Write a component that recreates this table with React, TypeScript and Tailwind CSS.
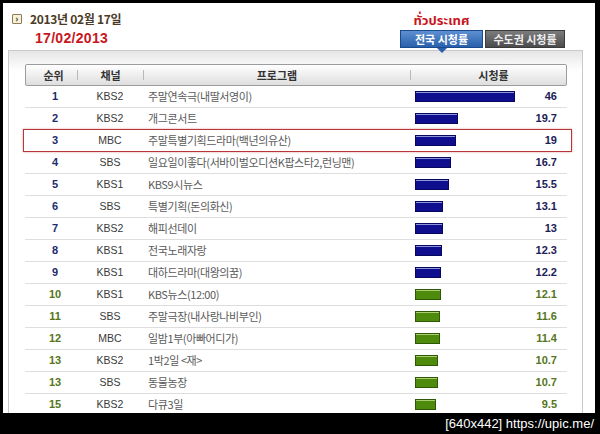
import React from "react"

type Row = {
  rank: number
  channel: string
  program: string
  rating: number
}

const rows: Row[] = [
  { rank: 1, channel: "KBS2", program: "주말연속극(내딸서영이)", rating: 46 },
  { rank: 2, channel: "KBS2", program: "개그콘서트", rating: 19.7 },
  { rank: 3, channel: "MBC", program: "주말특별기획드라마(백년의유산)", rating: 19 },
  { rank: 4, channel: "SBS", program: "일요일이좋다(서바이벌오디션K팝스타2,런닝맨)", rating: 16.7 },
  { rank: 5, channel: "KBS1", program: "KBS9시뉴스", rating: 15.5 },
  { rank: 6, channel: "SBS", program: "특별기획(돈의화신)", rating: 13.1 },
  { rank: 7, channel: "KBS2", program: "해피선데이", rating: 13 },
  { rank: 8, channel: "KBS1", program: "전국노래자랑", rating: 12.3 },
  { rank: 9, channel: "KBS1", program: "대하드라마(대왕의꿈)", rating: 12.2 },
  { rank: 10, channel: "KBS1", program: "KBS뉴스(12:00)", rating: 12.1 },
  { rank: 11, channel: "SBS", program: "주말극장(내사랑나비부인)", rating: 11.6 },
  { rank: 12, channel: "MBC", program: "일밤1부(아빠어디가)", rating: 11.4 },
  { rank: 13, channel: "KBS2", program: "1박2일 <재>", rating: 10.7 },
  { rank: 13, channel: "SBS", program: "동물농장", rating: 10.7 },
  { rank: 15, channel: "KBS2", program: "다큐3일", rating: 9.5 },
]

const kr = "font-['Noto_Sans_CJK_KR','Noto_Sans',sans-serif]"
const latin = "font-['Liberation_Sans',Arial,sans-serif]"

function HeaderSep() {
  return <span className="h-[10px] w-px bg-[#b8b8b8]" />
}

function RatingRow({ row, index }: { row: Row; index: number }) {
  const top = index < 9
  const highlight = index === 2
  return (
    <div className="relative grid h-[22px] grid-cols-[52px_66px_267px_157px] items-center border-b border-[#dedede]">
      {highlight ? (
        <span className="pointer-events-none absolute -top-px -bottom-px -left-[2px] -right-[5px] border border-[#b8353a] shadow-[0_0_2px_#e0a0a0]" />
      ) : null}
      <span
        className={`${latin} pl-[8px] text-center text-[11px] font-bold ${top ? "text-[#1d2a6b]" : "text-[#56761a]"}`}
      >
        {row.rank}
      </span>
      <span className={`${latin} text-center text-[10.5px] text-[#3a3a3a]`}>{row.channel}</span>
      <span className={`${kr} truncate pl-[5px] text-[11px] tracking-[-0.4px] text-[#5a5a5a]`}>
        {row.program}
      </span>
      <div className="flex items-center pl-[5px] pr-[10px]">
        <span
          className={
            top
              ? "h-[11px] border border-[#07075e] bg-[#0e0e8e] shadow-[inset_0_1px_0_#8d96dc]"
              : "h-[11px] border border-[#2f5806] bg-[#4e8a0c] shadow-[inset_0_1px_0_#abd072]"
          }
          style={{ width: Math.round(row.rating * 2.17) }}
        />
        <span
          className={`${latin} ml-auto text-[11px] font-bold ${top ? "text-[#1b2157]" : "text-[#55761c]"}`}
        >
          {row.rating}
        </span>
      </div>
    </div>
  )
}

export default function App() {
  return (
    <div className="flex h-[434px] w-[600px] flex-col overflow-hidden bg-black">
      <div className="ml-[3px] mt-[3px] h-[410px] w-[592px] overflow-hidden bg-white">
        {/* title + tabs */}
        <div className="flex h-[47px] justify-between">
          <div className="pl-[9px] pt-[10px]">
            <div className="flex items-center gap-[8px]">
              <span className="flex size-[10px] items-center justify-center rounded-[1px] border border-[#8c7b55] bg-[#f6f0dc] text-[8px] leading-none font-bold text-[#5a4a2a]">
                ›
              </span>
              <span className={`${kr} text-[12px] leading-none font-bold tracking-[-0.3px] text-[#4b3a26]`}>
                2013년 02월 17일
              </span>
            </div>
            <p className={`${latin} mt-[6px] pl-[23px] text-[14px] leading-none font-bold tracking-[0.3px] text-[#c8161d]`}>
              17/02/2013
            </p>
          </div>
          <div className="pr-[30px] pt-[9px]">
            <p className="w-[83px] text-center font-['Noto_Sans_Thai','Noto_Sans','DejaVu_Sans',sans-serif] text-[13px] leading-[18px] font-bold text-[#c8161d]">
              ทั่วประเทศ
            </p>
            <div className="flex gap-[2px]">
              <div
                className={`${kr} relative flex h-[18px] w-[83px] items-center justify-center border border-[#1b4a8c] bg-[linear-gradient(#5d8fd2,#2a60ab)] text-[11px] font-bold text-white`}
              >
                전국 시청률
                <span className="absolute -bottom-[6px] left-1/2 -translate-x-1/2 border-x-[5px] border-t-[5px] border-x-transparent border-t-[#2a60ab]" />
              </div>
              <div
                className={`${kr} flex h-[18px] w-[80px] items-center justify-center border border-[#3b3b3b] bg-[linear-gradient(#7c7c7c,#4c4c4c)] text-[11px] font-bold text-[#eee]`}
              >
                수도권 시청률
              </div>
            </div>
          </div>
        </div>

        {/* panel */}
        <div className="ml-[5px] h-[400px] w-[575px] border border-[#c9c9c9] bg-[linear-gradient(#e6e6e6,#ffffff_20px)] pl-[16px] pt-[13px]">
          <div className="w-[542px]">
            <div
              className={`${kr} grid h-[22px] grid-cols-[52px_66px_267px_157px] items-center rounded-[2px] border border-[#9c9c9c] bg-[linear-gradient(#ffffff,#dedede)] text-[11px] font-bold text-[#333]`}
            >
              <div className="flex items-center">
                <span className="flex-1 pl-[4px] text-center">순위</span>
                <HeaderSep />
              </div>
              <div className="flex items-center">
                <span className="flex-1 text-center">채널</span>
                <HeaderSep />
              </div>
              <div className="flex items-center">
                <span className="flex-1 text-center">프로그램</span>
                <HeaderSep />
              </div>
              <span className="pl-[8px] text-center">시청률</span>
            </div>
            {rows.map((row, i) => (
              <RatingRow key={i} row={row} index={i} />
            ))}
          </div>
        </div>
      </div>
      <div className="flex flex-1 items-center justify-end pr-[6px]">
        <span className={`${latin} text-[13px] text-white`}>[640x442] https://upic.me/</span>
      </div>
    </div>
  )
}
